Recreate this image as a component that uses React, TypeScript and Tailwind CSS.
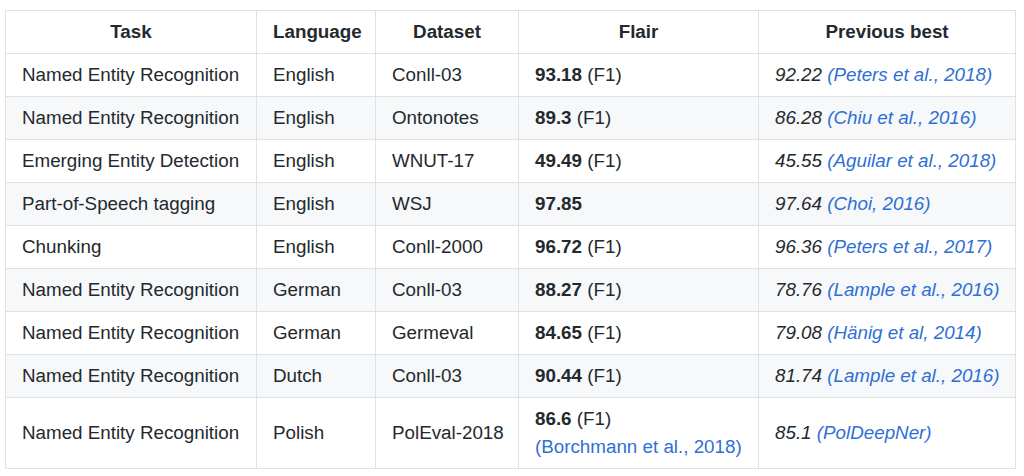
import React from "react";

type Row = {
  task: string;
  lang: string;
  ds: string;
  score: string;
  f1: boolean;
  prev: string;
  ref: string;
  extra?: string;
};

const rows: Row[] = [
  { task: "Named Entity Recognition", lang: "English", ds: "Conll-03", score: "93.18", f1: true, prev: "92.22", ref: "(Peters et al., 2018)" },
  { task: "Named Entity Recognition", lang: "English", ds: "Ontonotes", score: "89.3", f1: true, prev: "86.28", ref: "(Chiu et al., 2016)" },
  { task: "Emerging Entity Detection", lang: "English", ds: "WNUT-17", score: "49.49", f1: true, prev: "45.55", ref: "(Aguilar et al., 2018)" },
  { task: "Part-of-Speech tagging", lang: "English", ds: "WSJ", score: "97.85", f1: false, prev: "97.64", ref: "(Choi, 2016)" },
  { task: "Chunking", lang: "English", ds: "Conll-2000", score: "96.72", f1: true, prev: "96.36", ref: "(Peters et al., 2017)" },
  { task: "Named Entity Recognition", lang: "German", ds: "Conll-03", score: "88.27", f1: true, prev: "78.76", ref: "(Lample et al., 2016)" },
  { task: "Named Entity Recognition", lang: "German", ds: "Germeval", score: "84.65", f1: true, prev: "79.08", ref: "(Hänig et al, 2014)" },
  { task: "Named Entity Recognition", lang: "Dutch", ds: "Conll-03", score: "90.44", f1: true, prev: "81.74", ref: "(Lample et al., 2016)" },
  { task: "Named Entity Recognition", lang: "Polish", ds: "PolEval-2018", score: "86.6", f1: true, prev: "85.1", ref: "(PolDeepNer)", extra: "(Borchmann et al., 2018)" },
];

const cell = "border border-[#dfe2e5] px-4 align-middle whitespace-nowrap";

export default function App() {
  return (
    <div className="bg-white w-[1024px] h-[476px] overflow-hidden pt-[10px] pl-[5px] text-[#24292e] text-[18.8px] leading-[26px]" style={{ fontFamily: '"Liberation Sans", Arial, sans-serif' }}>
      <table className="border-collapse table-fixed w-[1010px]">
        <colgroup>
          <col className="w-[251px]" />
          <col className="w-[119px]" />
          <col className="w-[143px]" />
          <col className="w-[240px]" />
          <col className="w-[257px]" />
        </colgroup>
        <thead>
          <tr className="h-[42px] bg-white">
            <th className={`${cell} py-2 font-bold text-center`}>Task</th>
            <th className={`${cell} py-2 font-bold text-center`}>Language</th>
            <th className={`${cell} py-2 font-bold text-center`}>Dataset</th>
            <th className={`${cell} py-2 font-bold text-center`}>Flair</th>
            <th className={`${cell} py-2 font-bold text-center`}>Previous best</th>
          </tr>
        </thead>
        <tbody>
          {rows.map((r, i) => (
            <tr key={i} className={`${r.extra ? "h-[70px]" : "h-[42px]"} ${i % 2 === 1 ? "bg-[#f6f8fa]" : "bg-white"}`}>
              <td className={`${cell} py-2`}>{r.task}</td>
              <td className={`${cell} py-2`}>{r.lang}</td>
              <td className={`${cell} py-2`}>{r.ds}</td>
              <td className={r.extra ? `${cell} py-[7px] leading-[28px]` : `${cell} py-2`}>
                <span className="font-bold">{r.score}</span>
                {r.f1 ? " (F1)" : ""}
                {r.extra ? (
                  <>
                    <br />
                    <span className="text-[#2f6fd6]">{r.extra}</span>
                  </>
                ) : null}
              </td>
              <td className={`${cell} py-2 italic`}>
                {r.prev} <span className="text-[#2f6fd6]">{r.ref}</span>
              </td>
            </tr>
          ))}
        </tbody>
      </table>
    </div>
  );
}
